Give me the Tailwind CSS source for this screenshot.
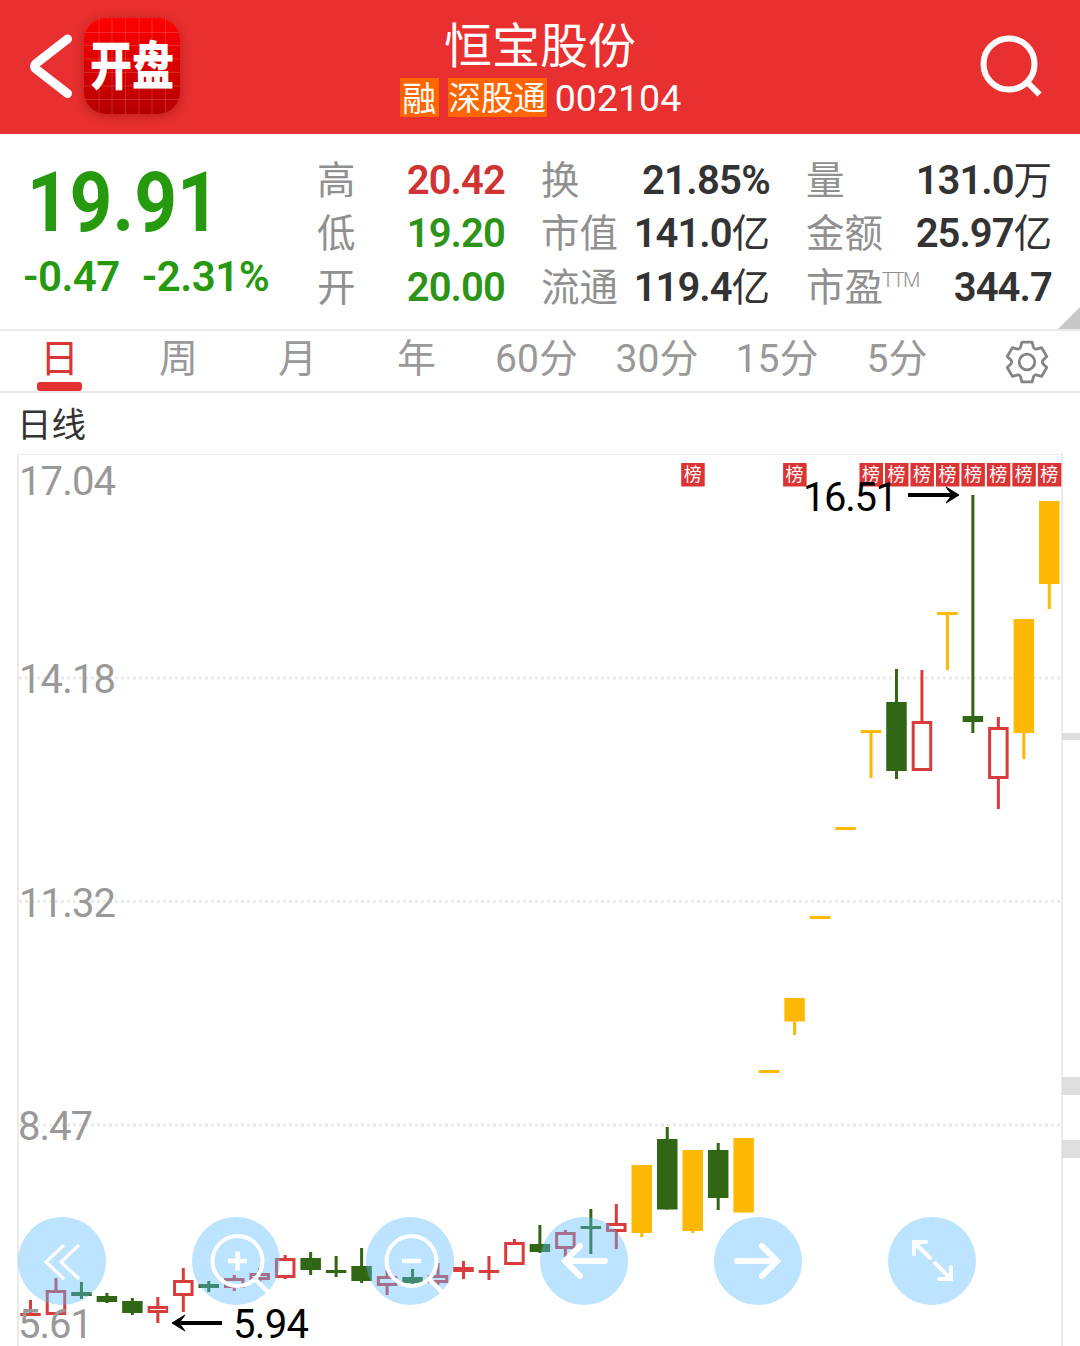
<!DOCTYPE html>
<html lang="zh-CN">
<head>
    <meta charset="UTF-8">
    <title>恒宝股份 002104</title>
    <script src="https://cdn.jsdelivr.net/npm/@tailwindcss/browser@4"></script>
</head>
<body class="bg-white w-[1080px] h-[1346px] overflow-hidden flex flex-col font-['Roboto','Noto_Sans_CJK_SC',sans-serif] text-[#333]">

    <!-- Header -->
    <header class="h-[134px] shrink-0 bg-[#e83030] text-white grid grid-cols-[1fr_auto_1fr] items-center">
        <div class="flex items-center pl-[28px] gap-[10px] pb-[2px]">
            <svg class="w-[46px] h-[68px]" viewBox="0 0 46 68" fill="none" stroke="#fff" stroke-width="9" stroke-linecap="round" stroke-linejoin="round">
                <path d="M39.500 7 L8 31.500 Q5 34.500 8 37 L39.500 61.500"/>
            </svg>
            <div class="size-[96px] rounded-[22px] overflow-hidden bg-linear-to-b from-[#ff0000] to-[#b40000] shadow-[0_2px_12px_rgba(120,0,0,0.4)] relative">
                <svg class="absolute inset-0" viewBox="0 0 96 96" stroke="#fff" stroke-opacity=".16" stroke-width="1">
                    <path d="M15 0V96M28 0V96M41.500 0V96M55 0V96M68 0V96M81.500 0V96M0 14.500H96M0 27.500H96M0 41H96M0 54.500H96M0 68H96M0 81.500H96"/>
                </svg>
                <div class="relative h-full pt-[2px] flex items-center justify-center text-[42px] leading-none font-black scale-y-125">开盘</div>
            </div>
        </div>
        <div class="flex flex-col items-center">
            <h1 class="text-[48px] leading-[56px] mt-[2px]">恒宝股份</h1>
            <div class="flex items-center mt-[2px] h-[40px] pl-[1px]">
                <span class="bg-[#ff6600] w-[39px] h-[39px] leading-[42px] text-[34px] text-center">融</span>
                <span class="bg-[#ff6600] w-[99px] h-[39px] leading-[42px] text-[32.500px] text-center ml-[9px]">深股通</span>
                <span class="text-[37.500px] leading-[39px] ml-[8px] pt-[3px]">002104</span>
            </div>
        </div>
        <div class="flex justify-end pr-[36px] pb-[3px]">
            <svg class="w-[66px] h-[66px]" viewBox="0 0 66 66" fill="none" stroke="#fff">
                <circle cx="31" cy="31" r="25.500" stroke-width="6"/>
                <path d="M49 49 L61.500 61.500" stroke-width="6"/>
            </svg>
        </div>
    </header>

    <!-- Quote summary -->
    <section class="h-[197px] shrink-0 flex border-b-2 border-[#e9e9e9] relative">
        <div class="w-[317px] text-[#26990f] font-bold">
            <div class="text-[84px] leading-[84px] pl-[30px] pt-[27px] origin-left scale-x-[0.89]">19.91</div>
            <div class="text-[42px] leading-[48px] pl-[23px] pt-[8px] flex gap-[22px] font-semibold tracking-[-0.500px]">
                <span>-0.47</span><span>-2.31%</span>
            </div>
        </div>
        <div class="grid grid-cols-[188px_229px_246px] gap-x-[36px] auto-rows-[53.500px] content-start pt-[19.500px] text-[38.500px] leading-[54px]">
            <div class="flex justify-between"><span class="text-[#909090]">高</span><b class="text-[40px] tracking-[-0.900px] font-semibold text-[#cf3434]">20.42</b></div>
            <div class="flex justify-between"><span class="text-[#909090]">换</span><b class="text-[40px] tracking-[-0.700px] font-semibold">21.85%</b></div>
            <div class="flex justify-between"><span class="text-[#909090]">量</span><span><b class="text-[40px] tracking-[-1px] font-semibold">131.0</b>万</span></div>
            <div class="flex justify-between"><span class="text-[#909090]">低</span><b class="text-[40px] tracking-[-0.900px] font-semibold text-[#2d9419]">19.20</b></div>
            <div class="flex justify-between"><span class="text-[#909090]">市值</span><span><b class="text-[40px] tracking-[-1px] font-semibold">141.0</b>亿</span></div>
            <div class="flex justify-between"><span class="text-[#909090]">金额</span><span><b class="text-[40px] tracking-[-1px] font-semibold">25.97</b>亿</span></div>
            <div class="flex justify-between"><span class="text-[#909090]">开</span><b class="text-[40px] tracking-[-0.900px] font-semibold text-[#2d9419]">20.00</b></div>
            <div class="flex justify-between"><span class="text-[#909090]">流通</span><span><b class="text-[40px] tracking-[-1px] font-semibold">119.4</b>亿</span></div>
            <div class="flex justify-between"><span class="text-[#909090] flex">市盈<span class="text-[20px] leading-[38px] font-light tracking-[-1.500px] -ml-px">TTM</span></span><b class="text-[40px] tracking-[-0.900px] font-semibold">344.7</b></div>
        </div>
        <svg class="absolute right-0 bottom-0 w-[22px] h-[22px]" viewBox="0 0 22 22"><path d="M22 0V22H0Z" fill="#c8c8c8"/></svg>
    </section>

    <!-- Period tabs -->
    <nav class="h-[62px] shrink-0 flex border-b-2 border-[#e9e9e9] text-[39px] leading-[56px] text-[#999] text-center">
        <div class="w-[119px] text-[#d93636] flex flex-col items-center">
            <span class="h-[51px]">日</span>
            <span class="w-[45px] h-[9px] rounded-[3px] bg-[#e33030]"></span>
        </div>
        <div class="w-[119px]">周</div>
        <div class="w-[119px]">月</div>
        <div class="w-[119px]">年</div>
        <div class="w-[121px]">60分</div>
        <div class="w-[120px]">30分</div>
        <div class="w-[120px]">15分</div>
        <div class="w-[120px]">5分</div>
        <div class="flex-1 flex justify-center items-center pl-[17px] pt-[2px]">
            <svg class="w-[46px] h-[46px]" viewBox="-23 -23 46 46" fill="none" stroke="#858585" stroke-width="2.800" stroke-linejoin="round">
                <path d="M-5.100 -19.800L5.100 -19.800L6.500 -14.600Q8 -12.400 9.400 -12.900L14.600 -14.400L19.750 -5.500L15.900 -1.700Q14.800 0 15.900 1.700L19.750 5.500L14.600 14.400L9.400 12.900Q8 12.400 6.500 14.600L5.100 19.800L-5.100 19.800L-6.500 14.600Q-8 12.400 -9.400 12.900L-14.600 14.400L-19.750 5.500L-15.900 1.700Q-14.800 0 -15.900 -1.700L-19.750 -5.500L-14.600 -14.400L-9.400 -12.900Q-8 -12.400 -6.500 -14.600Z"/>
                <circle r="7.800"/>
            </svg>
        </div>
    </nav>

    <div class="h-[61px] shrink-0 pl-[17px] text-[34.500px] leading-[65px]">日线</div>

    <!-- K-line chart -->
    <main class="h-[892px] shrink-0 relative">
        <svg class="block w-[1080px] h-[892px]" viewBox="0 454 1080 892">
            <g fill="none" stroke="#ebebeb" stroke-width="2">
                <path d="M18 1346V454.500"/>
                <path d="M17 454.500H1063" stroke-width="1"/>
                <path d="M1062 454V1346"/>
                <path d="M19 678H1061M19 901.500H1061M19 1125H1061" stroke-width="3" stroke-dasharray="3 3"/>
            </g>
            <g fill="#dedede">
                <rect x="1062" y="733" width="18" height="7"/>
                <rect x="1062" y="1077" width="18" height="18"/>
                <rect x="1062" y="1140" width="18" height="18"/>
            </g>
            <g id="candles"></g>
            <g id="marks" font-size="18" fill="#fff" text-anchor="middle"></g>
            <g font-size="40" fill="#999">
                <text x="19" y="495" textLength="97">17.04</text>
                <text x="19" y="693" textLength="97">14.18</text>
                <text x="19" y="917" textLength="97">11.32</text>
                <text x="18" y="1140" textLength="75">8.47</text>
                <text x="18" y="1338" textLength="75">5.61</text>
            </g>
            <g font-size="40" fill="#000">
                <text x="803" y="511" textLength="95">16.51</text>
                <text x="233" y="1338" textLength="76">5.94</text>
            </g>
            <g fill="none" stroke="#000">
                <path d="M908 495H955" stroke-width="4"/>
                <path d="M222 1323H177" stroke-width="4"/>
            </g>
            <path d="M959 495L946 487L952 495L946 503Z" stroke="#000"/>
            <path d="M172 1323L185 1315L179 1323L185 1331Z" stroke="#000"/>
        </svg>

        <!-- Floating controls -->
        <div class="absolute left-[18px] bottom-[41px] flex gap-[86px]">
            <button class="size-[88px] rounded-full bg-[#5bbbff]/41">
                <svg viewBox="0 0 88 88" fill="none" stroke="#fff" stroke-width="3.200"><path d="M46 28L28 45L46 62M61 28L43 45L61 62"/></svg>
            </button>
            <button class="size-[88px] rounded-full bg-[#5bbbff]/41">
                <svg viewBox="0 0 88 88" fill="none" stroke="#fff"><circle cx="45.500" cy="44" r="25" stroke-width="4"/><path d="M63 62L76 75" stroke-width="4.500"/><path d="M36 44H55M45.500 34.500V53.500" stroke-width="4.500"/></svg>
            </button>
            <button class="size-[88px] rounded-full bg-[#5bbbff]/41">
                <svg viewBox="0 0 88 88" fill="none" stroke="#fff"><circle cx="45.500" cy="44" r="25" stroke-width="4"/><path d="M63 62L76 75" stroke-width="4.500"/><path d="M36 44H55" stroke-width="4.500"/></svg>
            </button>
            <button class="size-[88px] rounded-full bg-[#5bbbff]/41">
                <svg viewBox="0 0 88 88" fill="none" stroke="#fff" stroke-width="6" stroke-linecap="round"><path d="M65 44H25M40 29L25 44L40 59"/></svg>
            </button>
            <button class="size-[88px] rounded-full bg-[#5bbbff]/41">
                <svg viewBox="0 0 88 88" fill="none" stroke="#fff" stroke-width="6" stroke-linecap="round"><path d="M23 44H63M48 29L63 44L48 59"/></svg>
            </button>
            <button class="size-[88px] rounded-full bg-[#5bbbff]/41">
                <svg viewBox="0 0 88 88" fill="none" stroke="#fff" stroke-width="4" stroke-linecap="round"><path d="M26 37V25H38M26 25L42 41M47 46L63 62M63 50V62H51"/></svg>
            </button>
        </div>
    </main>

    <script>
        // type, high, body top, body bottom, low
        // r = up (hollow), R = up (solid), g = down, y = limit up
        const candles = [
            ['R', 1300, 1313, 1316, 1316], ['r', 1278, 1290, 1315, 1315], ['g', 1282, 1292, 1296, 1299],
            ['g', 1293, 1296, 1302, 1303], ['g', 1298, 1301, 1313, 1315], ['r', 1297, 1306, 1313, 1323],
            ['r', 1268, 1280, 1296, 1312], ['g', 1281, 1284, 1288, 1292], ['r', 1275, 1278, 1288, 1291],
            ['r', 1268, 1273, 1280, 1282], ['r', 1255, 1258, 1278, 1279], ['g', 1252, 1258, 1270, 1275],
            ['g', 1256, 1270, 1273, 1277], ['g', 1248, 1266, 1281, 1283], ['r', 1270, 1276, 1286, 1295],
            ['g', 1269, 1277, 1283, 1284], ['r', 1263, 1275, 1283, 1285], ['R', 1261, 1267, 1272, 1279],
            ['R', 1256, 1270, 1273, 1280], ['r', 1239, 1242, 1265, 1265], ['g', 1225, 1244, 1252, 1253],
            ['r', 1230, 1232, 1249, 1257], ['g', 1209, 1226, 1229, 1254], ['r', 1204, 1223, 1232, 1249],
            ['y', 1165, 1165, 1233, 1237], ['g', 1127, 1139, 1209.5, 1210], ['y', 1150, 1150, 1231, 1233],
            ['g', 1143, 1150, 1198, 1210], ['y', 1138, 1138, 1212.5, 1213], ['y', 1070, 1070, 1073, 1073],
            ['y', 998, 998, 1021.5, 1035], ['y', 916, 916, 919, 919], ['y', 827, 827, 830, 830],
            ['y', 730, 730, 733, 778], ['g', 669, 702, 771, 779], ['r', 670, 721, 771, 771],
            ['y', 612, 612, 615, 670], ['g', 495, 716, 722, 733], ['r', 717, 727, 779, 809],
            ['y', 619, 619, 733, 759], ['y', 501, 501, 584, 609]
        ];
        const colors = { r: '#d83c3c', R: '#d83c3c', g: '#306614', y: '#ffb904' };
        const centerX = i => 30.5 + i * 25.47;

        document.getElementById('candles').innerHTML = candles.map(([type, high, top, bottom, low], i) => {
            const x = centerX(i);
            const color = colors[type];
            const body = type === 'r'
                ? `<rect x="${x - 8.75}" y="${top + 1.5}" width="17.5" height="${bottom - top - 3}" fill="none" stroke="${color}" stroke-width="3"/>`
                : `<rect x="${x - 10.25}" y="${top}" width="20.5" height="${bottom - top}" fill="${color}"/>`;
            return `<path d="M${x} ${high}V${top}M${x} ${bottom}V${low}" stroke="${color}" stroke-width="3"/>${body}`;
        }).join('');

        // Days on the trading leaderboard
        document.getElementById('marks').innerHTML = [26, 30, 33, 34, 35, 36, 37, 38, 39, 40].map(i => {
            const x = centerX(i);
            return `<rect x="${x - 11.5}" y="463" width="23.5" height="23.5" fill="#db3434"/><text x="${x}" y="481">榜</text>`;
        }).join('');
    </script>
</body>
</html>
